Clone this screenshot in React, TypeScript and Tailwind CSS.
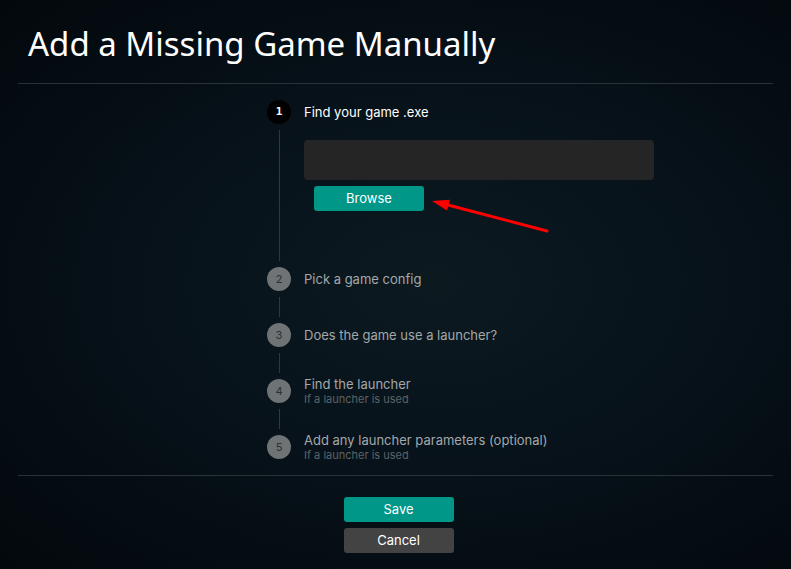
const steps = [
  { n: 2, title: 'Pick a game config' },
  { n: 3, title: 'Does the game use a launcher?' },
  { n: 4, title: 'Find the launcher', sub: 'If a launcher is used' },
  { n: 5, title: 'Add any launcher parameters (optional)', sub: 'If a launcher is used' },
];

const StepCircle = ({ n, active }: { n: number; active?: boolean }) => (
  <div
    className={
      active
        ? 'flex h-6 w-6 shrink-0 items-center justify-center rounded-full bg-black font-["DejaVu_Sans_Mono",monospace] text-[11px] font-bold text-white'
        : 'flex h-6 w-6 shrink-0 items-center justify-center rounded-full bg-[#6e7375] font-["Inter",sans-serif] text-[11px] text-[#2b3033]'
    }
  >
    {n}
  </div>
);

const Arrow = () => (
  <svg className="pointer-events-none absolute left-0 top-0" width="791" height="569" viewBox="0 0 791 569">
    <line x1="547" y1="231" x2="446" y2="204.5" stroke="#ff0000" strokeWidth="3" strokeLinecap="round" />
    <polygon points="432,201 450,199.8 447,210.4" fill="#ff0000" />
  </svg>
);

export default function App() {
  return (
    <div className='relative h-[569px] w-[791px] overflow-hidden bg-[radial-gradient(ellipse_at_55%_50%,#0c1a20_0%,#07121a_45%,#03080c_100%)] font-["Inter",sans-serif]'>
      <div className="mx-[18px] flex h-[84px] items-center border-b border-[#283237] pl-[10px] pt-[4px]">
        <h1 className='font-["Noto_Sans",sans-serif] text-[33px] font-normal leading-none text-white'>
          Add a Missing Game Manually
        </h1>
      </div>

      <div className="mx-[18px] border-b border-[#283237] pb-[16px] pl-[249px] pt-[16px]">
        <div className="flex h-6 items-center gap-[13px]">
          <StepCircle n={1} active />
          <span className="pt-px text-[13px] text-white">Find your game .exe</span>
        </div>
        <div className="my-[6px] ml-[12px] border-l border-[#2f383d] pb-[50px] pl-[24px] pt-[10px]">
          <div className="h-10 w-[350px] rounded bg-[#252525]" />
          <button className="ml-[10px] mt-[6px] h-[25px] w-[110px] rounded-[3px] bg-[#009688] text-[13px] text-white">
            Browse
          </button>
        </div>

        {steps.map((s, i) => (
          <div key={s.n}>
            <div className="flex h-6 items-center gap-[13px]">
              <StepCircle n={s.n} />
              <div className="flex flex-col">
                <span className="text-[13px] leading-4 text-[#a3a8aa]">{s.title}</span>
                {s.sub && <span className="text-[11px] leading-[15px] text-[#5c6366]">{s.sub}</span>}
              </div>
            </div>
            {i < steps.length - 1 && <div className="my-[6px] ml-[12px] h-5 border-l border-[#2f383d]" />}
          </div>
        ))}
      </div>

      <div className="mx-[18px] flex flex-col items-center gap-[6px] pl-[6px] pt-[21px]">
        <button className="h-[25px] w-[110px] rounded-[3px] bg-[#009688] text-[13px] text-white">Save</button>
        <button className="h-[25px] w-[110px] rounded-[3px] bg-[#434343] text-[13px] text-white">Cancel</button>
      </div>

      <Arrow />
    </div>
  );
}
